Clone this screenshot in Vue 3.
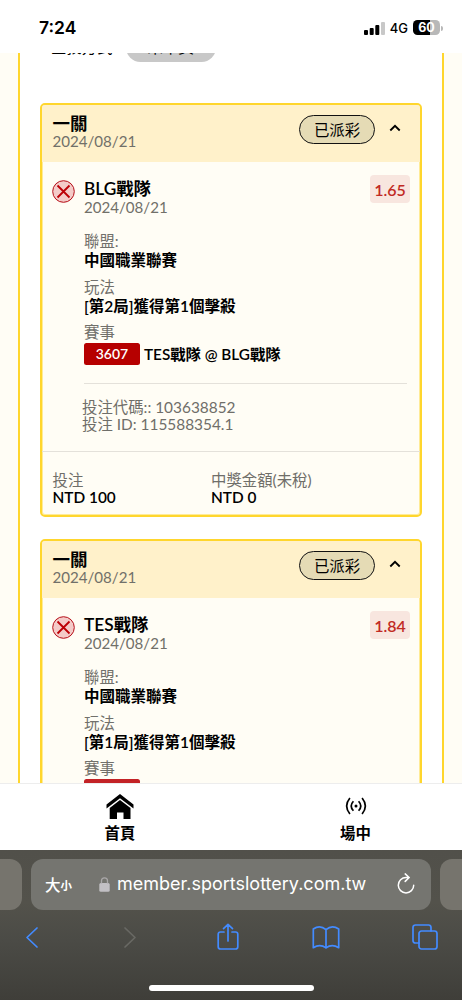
<script setup>
const bets = [
  { team: 'BLG戰隊', odds: '1.65', play: '[第2局]獲得第1個擊殺' },
  { team: 'TES戰隊', odds: '1.84', play: '[第1局]獲得第1個擊殺' },
]
</script>

<template>
  <div class="screen">
    <header class="status">
      <span class="time">7:24</span>
      <div class="signals">
        <svg class="bars" width="21" height="13" viewBox="0 0 21 13">
          <rect x="0" y="8" width="4" height="5" rx="1" />
          <rect x="5.7" y="6" width="4" height="7" rx="1" />
          <rect x="11.3" y="3" width="4" height="10" rx="1" />
          <rect x="17" y="0" width="4" height="13" rx="1" fill="#c8c8c8" />
        </svg>
        <span class="net">4G</span>
        <span class="battery"><span class="level">60</span></span>
        <span class="cap"></span>
      </div>
    </header>

    <main class="viewport">
      <div class="panel">
        <div class="filter">
          <span>查找方式</span>
          <span class="chip">未中獎</span>
        </div>
        <article v-for="b in bets" :key="b.team" class="card">
          <div class="head">
            <div>
              <div class="title">一關</div>
              <div class="date">2024/08/21</div>
            </div>
            <span class="pill">已派彩</span>
            <svg class="caret" width="12" height="8" viewBox="0 0 12 8">
              <path d="M1.3 6.5 6 1.9l4.7 4.6" fill="none" stroke="#000" stroke-width="1.9" />
            </svg>
          </div>
          <div class="body">
            <svg class="lost" width="23" height="23" viewBox="0 0 23 23">
              <circle cx="11.5" cy="11.5" r="10.8" fill="#f4cbc8" stroke="#b50e18" stroke-width="1" />
              <path d="m5.500 5.500 12 12M17.500 5.500l-12 12" stroke="#bd0006" stroke-width="1.8" />
            </svg>
            <div class="info">
              <div class="top">
                <div>
                  <div class="team">{{ b.team }}</div>
                  <div class="date">2024/08/21</div>
                </div>
                <span class="odds">{{ b.odds }}</span>
              </div>
              <div class="field"><div>聯盟:</div><b>中國職業聯賽</b></div>
              <div class="field"><div>玩法</div><b>{{ b.play }}</b></div>
              <div class="field"><div>賽事</div></div>
              <div class="match"><span class="code">3607</span><b>TES戰隊 @ BLG戰隊</b></div>
              <div class="ids">
                <div>投注代碼:: 103638852</div>
                <div>投注 ID: 115588354.1</div>
              </div>
            </div>
          </div>
          <div class="foot">
            <div><div>投注</div><b>NTD 100</b></div>
            <div><div>中獎金額(未稅)</div><b>NTD 0</b></div>
          </div>
        </article>
      </div>
    </main>

    <nav class="tabs">
      <div class="tab">
        <svg width="28" height="25" viewBox="0 0 28 25">
          <path d="M14 0 .5 10.5v4L14 4.2l13.5 10.3v-4z" />
          <path d="M14 6 3.7 14v11H11v-6.500h6.500V25h7V14z" />
        </svg>
        <span>首頁</span>
      </div>
      <div class="tab">
        <svg width="22" height="25" viewBox="0 0 22 25" fill="none" stroke="#000" stroke-width="1.7">
          <path d="M4.900 4Q-1.600 12 4.900 20M17.100 4Q23.600 12 17.100 20M8.400 7.200Q4 12 8.400 16.800M13.600 7.200Q18 12 13.600 16.800" />
          <circle cx="11" cy="12" r="1.500" fill="#000" stroke="none" />
        </svg>
        <span>場中</span>
      </div>
    </nav>

    <footer class="browser">
      <div class="address-row">
        <span class="side left"></span>
        <div class="address">
          <span class="big">大</span><span class="small">小</span>
          <svg class="lock" width="11" height="15" viewBox="0 0 11 15">
            <rect x="0.300" y="6" width="10.400" height="8.800" rx="1.500" fill="#c2c0c4" />
            <path d="M2.500 6.500V3.800a3 3 0 0 1 6 0v2.700" fill="none" stroke="#aaa8a9" stroke-width="1.300" />
          </svg>
          <span class="url">member.sportslottery.com.tw</span>
          <svg class="reload" width="18" height="21" viewBox="0 0 18 21" fill="none" stroke="#fff" stroke-width="1.500" stroke-linecap="round">
            <path d="M11.500 4.500H9A7.700 7.700 0 1 0 16.700 12.200M8.200.9l3.900 3.600-3.900 3.900" />
          </svg>
        </div>
        <span class="side right"></span>
      </div>
      <div class="tools">
        <svg width="26" height="28" viewBox="0 0 26 28"><path d="M18 5 8 14.500 18 24" /></svg>
        <svg width="26" height="28" viewBox="0 0 26 28" class="off"><path d="m8 5 10 9.500L8 24" /></svg>
        <svg width="26" height="28" viewBox="0 0 26 28"><path d="M9 9H5.500Q3.200 9 3.200 11.300v12.400Q3.200 26 5.500 26h15q2.300 0 2.300-2.300V11.300Q22.800 9 20.500 9H17M13 18V1.500M8.500 5.700 13 1.300l4.500 4.400" /></svg>
        <svg width="28" height="28" viewBox="0 0 28 28"><path d="M14 6.700Q8 1.300 1.300 6v18.700Q8 20.500 14 24.900q6-4.400 12.700-.2V6Q20 1.300 14 6.700V24.900" /></svg>
        <svg width="26" height="28" viewBox="0 0 26 28"><path d="M7 20H3.500Q1 20 1 17.500v-13Q1 2 3.500 2h13Q19 2 19 4.500V8" /><rect x="7" y="8" width="18" height="18" rx="2.500" /></svg>
      </div>
      <div class="home-bar"></div>
    </footer>
  </div>
</template>

<style>
body { margin: 0; }
</style>

<style scoped>
* { box-sizing: border-box; }
.screen {
  width: 462px; height: 1000px; display: flex; flex-direction: column;
  overflow: hidden; background: #fff; color: #000; white-space: nowrap;
  font: 15.4px/18px Lato, "Noto Sans CJK TC", sans-serif;
}
svg { flex: none; display: block; }
b { font-weight: 600; }
.status { height: 53px; flex: none; display: flex; justify-content: space-between; padding: 18px 19px 0 39px; }
.time { font: 600 17.5px/20px Inter, sans-serif; }
.signals { display: flex; height: 20px; align-items: center; }
.net { font: 500 13px/20px Inter, sans-serif; margin: 0 5px 0 5px; }
.battery { width: 27px; height: 15px; margin-top: -1px; border-radius: 4.5px; background: linear-gradient(90deg, #000 62%, #b8b8b8 62%); text-align: center; }
.level { display: block; color: #fff; font: 700 12.5px/15px Inter, sans-serif; }
.cap { width: 2px; height: 5px; margin-left: 1px; border-radius: 0 3px 3px 0; background: #b8b8b8; }

.viewport { display: flow-root; height: 730px; flex: none; overflow: hidden; background: #fffdf5; padding: 0 18px; }
.panel { background: #fff; border: solid #ffd62d; border-width: 0 2px; height: 820px; padding: 0 20px; }
.filter { height: 50px; margin-top: -20px; padding-left: 11px; display: flex; align-items: flex-start; line-height: 29px; }
.chip { width: 90px; height: 29px; margin-left: 13px; border-radius: 15px; background: #c8c8c8; text-align: center; }
.card { width: 382px; height: 414px; border: 2px solid #ffd62d; border-radius: 5px; background: #fffdf5; margin: 20px 0 22px; box-shadow: inset 0 0 0 1px #ffeb96; overflow: hidden; }
.panel .card + .card { margin-top: 0; }
.head { height: 57px; background: #fff1ca; display: flex; padding: 10px 19px 0 10.500px; }
.head > div { flex: 1; }
.title { font-size: 17.5px; font-weight: 700; line-height: 17px; }
.date { color: #717069; font-size: 15.1px; line-height: 18px; }
.pill { width: 76px; height: 29px; border: 1.3px solid #111; border-radius: 15px; background: #e5dbb5; text-align: center; line-height: 28px; }
.caret { margin: 9px 0 0 14px; }
.body { display: flex; padding: 16px 0 0 10px; height: 289px; }
.lost { margin-top: 2px; }
.info { width: 323px; margin-left: 9px; }
.top { display: flex; justify-content: space-between; width: 326px; height: 54px; }
.team { font-size: 17.3px; line-height: 19px; font-weight: 600; margin-top: 1px; }
.odds { width: 40px; height: 28px; margin-top: -3px; border-radius: 4px; background: #f8e6df; color: #c12a24; text-align: center; font-weight: 600; font-size: 16px; line-height: 29px; }
.field { height: 45.7px; color: #71706b; line-height: 19px; }
.field b { display: block; color: #000; font-size: 15.500px; }
.field:nth-of-type(4) { height: 20px; }
.match { display: flex; align-items: center; height: 22px; gap: 4px; }
.match b { font-size: 15.300px; }
.code { width: 56px; height: 22px; border-radius: 2.5px; background: #b60000; color: #fff; text-align: center; line-height: 22px; font-weight: 600; font-size: 14px; }
.ids { margin-top: 18px; border-top: 1px solid #e4e1da; padding-top: 15px; color: #6f6e69; line-height: 17px; }
.ids div { margin-left: -2px; }
.foot { border-top: 1px solid #e4e1da; display: grid; grid-template-columns: 158.5px 1fr; padding: 20px 0 0 10.500px; line-height: 16.500px; color: #6f6e69; }
.foot b { color: #000; }
.card + .card .code { background: #c32226; }
.card + .card .match b { padding-top: 2px; }

.tabs { height: 67px; flex: none; border-top: 1px solid #ededed; background: #fff; display: grid; grid-template-columns: 1fr 1fr; }
.tab { display: flex; flex-direction: column; align-items: center; padding-top: 10px; font-weight: 600; line-height: 20px; }
.tab:first-child { padding-left: 9px; }
.tab:last-child { padding-left: 18px; }
.tab span { margin-top: 4px; }

.browser { flex: 1; background: linear-gradient(#51504a, #53524b 35%, #4b4b46 60%, #3f3e39); }
.address-row { display: flex; gap: 9px; padding-top: 9px; justify-content: space-between; }
.side { width: 22px; height: 51px; background: #76746d; }
.side.left { border-radius: 0 12px 12px 0; }
.side.right { border-radius: 12px 0 0 12px; }
.address { width: 400px; height: 51px; border-radius: 12px; background: #757570; display: flex; align-items: center; color: #fff; padding-left: 14px; }
.big { font-size: 15.5px; font-weight: 500; }
.small { font-size: 11.5px; font-weight: 600; margin-top: 3px; }
.lock { margin-left: 27px; }
.url { font: 18px/24px Inter, sans-serif; margin: -1px 0 0 7px; width: 250px; }
.reload { margin-left: 30px; margin-top: -3px; }
.tools { display: flex; justify-content: space-between; padding: 13px 24px 0 19px; }
.tools svg { fill: none; stroke: #438bff; stroke-width: 1.7; stroke-linejoin: round; stroke-linecap: round; }
.tools .off { stroke: #696964; }
.home-bar { width: 165px; height: 6px; border-radius: 3px; background: #fff; margin: 34px auto 0; }
</style>
